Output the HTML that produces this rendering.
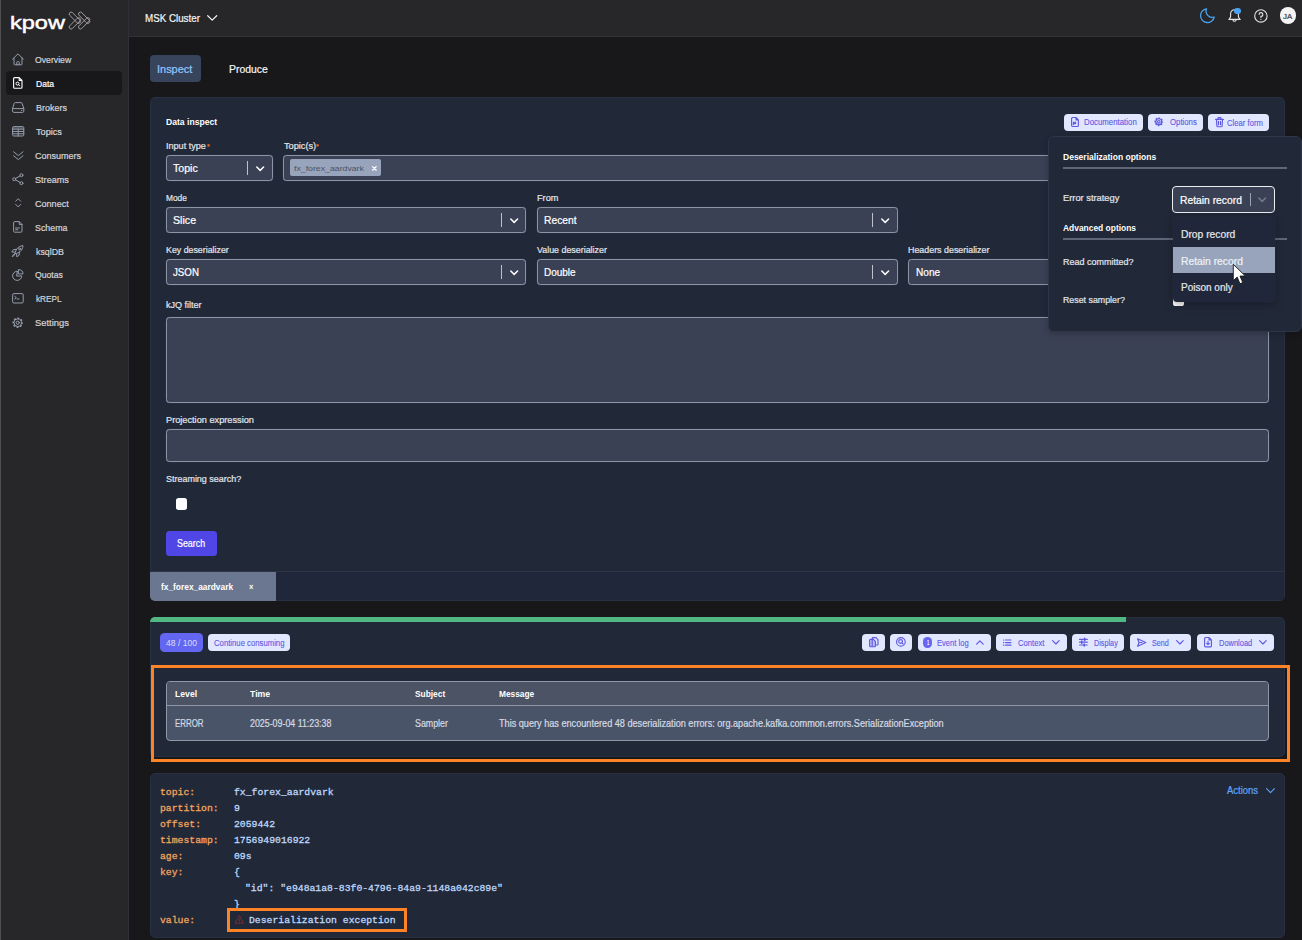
<!DOCTYPE html>
<html lang="en">
<head>
<meta charset="utf-8">
<title>Kpow - Data inspect</title>
<style>
*{box-sizing:border-box;margin:0;padding:0}
html,body{width:1302px;height:940px;overflow:hidden;background:#18181b}
body{font-family:"Liberation Sans",sans-serif;position:relative}
#app{position:absolute;left:0;top:0;width:1302px;height:940px;overflow:hidden}
.b{position:absolute}
.t{position:absolute;white-space:nowrap;line-height:1;transform-origin:0 0;display:block}
svg{position:absolute;overflow:visible}
.ic{fill:none;stroke:#959dad;stroke-width:1;stroke-linecap:round;stroke-linejoin:round}
.ii{fill:none;stroke:#5f58e2;stroke-width:1.15;stroke-linecap:round;stroke-linejoin:round}
.inp{position:absolute;background:#3b4155;border:1px solid #8c94a7;border-radius:3.5px;box-shadow:0 0 .8px rgba(150,158,176,.55)}
.panel{position:absolute;background:#212838;border:1px solid #293042;border-radius:5px}
.btn{position:absolute;background:#e0e7ff;border-radius:4px;height:17.3px;top:633.7px}
.sep{position:absolute;width:1px;background:#bcc1cc}
</style>
</head>
<body>
<div id="app">

<!-- ===== sidebar ===== -->
<div class="b" style="left:0;top:0;width:128px;height:940px;background:#27272a"></div>
<div class="b" style="left:128px;top:0;width:1px;height:940px;background:#2f3138"></div>
<div class="b" style="left:0;top:0;width:1px;height:940px;background:#505053"></div>
<div class="b" style="left:6px;top:71px;width:116px;height:24px;background:#18181b;border-radius:4px"></div>

<!-- ===== header ===== -->
<div class="b" style="left:129px;top:0;width:1173px;height:36px;background:#27272a"></div>
<div class="b" style="left:129px;top:36px;width:1173px;height:1px;background:#323236"></div>

<!-- logo chevrons -->
<svg style="left:0;top:0" width="100" height="36" viewBox="0 0 100 36"><g fill="none" stroke="#b3aeb1" stroke-width=".8">
<rect x="67.65" y="15.85" width="14.4" height="3.8" rx="1.9" transform="rotate(45 74.85 17.75)"/>
<rect x="67.65" y="21.45" width="14.4" height="3.8" rx="1.9" transform="rotate(-45 74.85 23.35)"/>
<rect x="76.95" y="15.85" width="14.4" height="3.8" rx="1.9" transform="rotate(45 84.15 17.75)"/>
<rect x="76.95" y="21.45" width="14.4" height="3.8" rx="1.9" transform="rotate(-45 84.15 23.35)"/>
</g></svg>
<!-- home -->
<svg style="left:12px;top:52.9px" width="12" height="12.4" viewBox="0 0 12 12.4"><path class="ic" d="M.6 6.2 6 .8 11.4 6.2M2 5V11.2A.6.6 0 0 0 2.6 11.8H9.4A.6.6 0 0 0 10 11.2V5M4.8 11.8V9.2A.6.6 0 0 1 5.4 8.6H6.6A.6.6 0 0 1 7.2 9.2V11.8"/></svg>
<!-- data (doc search) active -->
<svg style="left:13px;top:77.4px" width="9.6" height="11.8" viewBox="0 0 9.6 11.8"><path d="M.6 1.6A1 1 0 0 1 1.6.6H6.2L9 3.4V10.2A1 1 0 0 1 8 11.2H1.6A1 1 0 0 1 .6 10.2ZM6.2.6V3.4H9" fill="none" stroke="#fff" stroke-width="1.1" stroke-linejoin="round"/><circle cx="4.5" cy="6.6" r="1.5" fill="none" stroke="#fff" stroke-width="1"/><path d="M5.6 7.7 6.6 8.7" stroke="#fff" stroke-width="1" stroke-linecap="round"/></svg>
<!-- brokers (server) -->
<svg style="left:11.6px;top:101.6px" width="12.4" height="11" viewBox="0 0 12.4 11"><path class="ic" d="M.6 6.6 2.2 1.4A1.2 1.2 0 0 1 3.3.6H9.1A1.2 1.2 0 0 1 10.2 1.4L11.8 6.6V9.2A1.2 1.2 0 0 1 10.6 10.4H1.8A1.2 1.2 0 0 1 .6 9.2ZM.6 6.6H11.8M9.4 8.5H9.8"/></svg>
<!-- topics (table) -->
<svg style="left:11.6px;top:125.8px" width="12.4" height="10.6" viewBox="0 0 12.4 10.6"><path class="ic" d="M.6 1.6A1 1 0 0 1 1.6.6H10.8A1 1 0 0 1 11.8 1.6V9A1 1 0 0 1 10.8 10H1.6A1 1 0 0 1 .6 9ZM.6 3.2H11.8M.6 5.5H11.8M.6 7.8H11.8M6.2 3.2V10"/><path d="M1 1H11.4V3H1Z" fill="#959dad" opacity=".35"/></svg>
<!-- consumers (double chevron down) -->
<svg style="left:12.6px;top:150.6px" width="10.6" height="9.4" viewBox="0 0 10.6 9.4"><path class="ic" d="M.6.8 5.3 4.6 10 .8M.6 4.8 5.3 8.6 10 4.8"/></svg>
<!-- streams (share) -->
<svg style="left:12px;top:173px" width="11.6" height="12.4" viewBox="0 0 11.6 12.4"><g class="ic"><circle cx="2.2" cy="6.2" r="1.5"/><circle cx="9.4" cy="2.2" r="1.5"/><circle cx="9.4" cy="10.2" r="1.5"/><path d="M3.5 5.5 8.1 2.9M3.5 6.9 8.1 9.5"/></g></svg>
<!-- connect (up/down selector) -->
<svg style="left:14.6px;top:198.4px" width="6.4" height="9.6" viewBox="0 0 6.4 9.6"><path class="ic" d="M.7 3.2 3.2.7 5.7 3.2M.7 6.4 3.2 8.9 5.7 6.4"/></svg>
<!-- schema (doc text) -->
<svg style="left:13px;top:221.2px" width="9.6" height="11.8" viewBox="0 0 9.6 11.8"><path class="ic" d="M.6 1.6A1 1 0 0 1 1.6.6H6.2L9 3.4V10.2A1 1 0 0 1 8 11.2H1.6A1 1 0 0 1 .6 10.2ZM6.2.6V3.4H9M2.6 7H6.4M2.6 8.8H4.8"/></svg>
<!-- ksqlDB (rocket) -->
<svg style="left:11.4px;top:244.8px" width="12.6" height="12.4" viewBox="0 0 12.6 12.4"><g class="ic"><path d="M4.2 8.6C4.2 5 6.8 1.2 12 .6 11.6 5.8 7.8 8.4 4.2 8.6Z"/><path d="M5.6 4.4 2.4 4.6.8 7 3.6 7.2M8.4 7.2 8.2 10.2 5.8 11.8 5.6 9"/><circle cx="8.6" cy="4" r="1"/><path d="M3.4 9.2C2.2 9.4 1.4 10.6 1.2 11.6 2.2 11.4 3.4 10.6 3.6 9.4"/></g></svg>
<!-- quotas (pie) -->
<svg style="left:12px;top:268.8px" width="11.6" height="11.8" viewBox="0 0 11.6 11.8"><g class="ic"><path d="M5 2.2A4.6 4.6 0 1 0 9.8 7H5Z"/><path d="M6.8.6A4.4 4.4 0 0 1 11 4.9H6.8Z"/></g></svg>
<!-- kREPL (terminal) -->
<svg style="left:11.8px;top:293.4px" width="11.8" height="10.6" viewBox="0 0 11.8 10.6"><path class="ic" d="M.6 1.8A1.2 1.2 0 0 1 1.8.6H10A1.2 1.2 0 0 1 11.2 1.8V8.8A1.2 1.2 0 0 1 10 10H1.8A1.2 1.2 0 0 1 .6 8.8ZM2.8 3.4 4.4 4.7 2.8 6M5.2 6H7"/></svg>
<!-- settings (gear) -->
<svg style="left:11.8px;top:316.7px" width="11.4" height="11.4" viewBox="0 0 11.4 11.4"><circle cx="5.7" cy="5.7" r="4.5" fill="none" stroke="#959dad" stroke-width="1.5" stroke-dasharray="1.9 1.634" stroke-dashoffset=".95"/><circle class="ic" cx="5.7" cy="5.7" r="3.8"/><circle class="ic" cx="5.7" cy="5.7" r="1.6"/></svg>
<!-- header chevron -->
<svg style="left:206.8px;top:14.8px" width="10.4" height="6" viewBox="0 0 10.4 6"><path d="M.7.7 5.2 5.2 9.7.7" fill="none" stroke="#f4f4f5" stroke-width="1.2" stroke-linecap="round" stroke-linejoin="round"/></svg>
<!-- moon -->
<svg style="left:1200.4px;top:8px" width="15" height="15" viewBox="0 0 15 15"><path d="M6.6.8A6.1 6.1 0 0 0 14.2 9 6.9 6.9 0 1 1 6.6.8Z" fill="none" stroke="#4aa3f0" stroke-width="1.3" stroke-linejoin="round"/></svg>
<!-- bell -->
<svg style="left:1227.6px;top:8.6px" width="13" height="14" viewBox="0 0 13 14"><path d="M6.5.8A3.9 3.9 0 0 0 2.6 4.7V7.4C2.6 8.6 1.6 9.4.8 10.4H12.2C11.4 9.4 10.4 8.6 10.4 7.4V4.7A3.9 3.9 0 0 0 6.5.8ZM4.8 10.6A1.7 1.7 0 0 0 8.2 10.6" fill="none" stroke="#e4e4e7" stroke-width="1.1" stroke-linejoin="round"/></svg>
<div class="b" style="left:1234.1px;top:7.8px;width:6.6px;height:6.6px;border-radius:50%;background:#4aa3f0"></div>
<!-- help -->
<svg style="left:1253.8px;top:8.6px" width="13.8" height="13.8" viewBox="0 0 13.8 13.8"><circle cx="6.9" cy="6.9" r="6.2" fill="none" stroke="#e4e4e7" stroke-width="1.1"/><path d="M5.1 5.4A1.9 1.9 0 1 1 6.9 7.4V8.4M6.9 10.2V10.4" fill="none" stroke="#e4e4e7" stroke-width="1.1" stroke-linecap="round"/></svg>
<!-- avatar -->
<div class="b" style="left:1279.6px;top:7.1px;width:16.7px;height:16.7px;border-radius:50%;background:#f4f4f5"></div>



<!-- ===== tabs ===== -->
<div class="b" style="left:150px;top:55.4px;width:50.5px;height:26.6px;background:#38435c;border-radius:4px"></div>

<!-- ===== panel 1 : data inspect ===== -->
<div class="panel" style="left:150px;top:97.3px;width:1134.5px;height:504px"></div>
<div class="b" style="left:151px;top:571.2px;width:1132.5px;height:1px;background:#2c3446"></div>
<div class="b" style="left:151px;top:572.2px;width:1132.5px;height:28.3px;background:#20273a;border-radius:0 0 4px 0"></div>
<div class="b" style="left:150px;top:572.2px;width:125.5px;height:29.1px;background:#6b7791;border-radius:0 0 0 5px"></div>
<!-- row 1 -->
<div class="inp" style="left:166px;top:155.2px;width:107px;height:25.6px"></div>
<div class="sep" style="left:247.3px;top:161.3px;height:13.4px"></div>
<svg style="left:256px;top:165.6px" width="8.4" height="5.6" viewBox="0 0 8.4 5.6"><path d="M.8 1 4.2 4.4 7.6 1" fill="none" stroke="#fff" stroke-width="1.5" stroke-linecap="round" stroke-linejoin="round"/></svg>
<div class="inp" style="left:283px;top:155.2px;width:985.5px;height:25.6px"></div>
<div class="b" style="left:290.3px;top:159px;width:91px;height:17.3px;background:#98a4bc;border-radius:2px"></div>
<svg style="left:371.6px;top:165.8px" width="4.8" height="4.8" viewBox="0 0 4.8 4.8"><path d="M.6.6 4.2 4.2M4.2.6.6 4.2" fill="none" stroke="#fff" stroke-width="1.25" stroke-linecap="round"/></svg>
<!-- row 2 -->
<div class="inp" style="left:166px;top:207.2px;width:360.3px;height:25.6px"></div>
<div class="sep" style="left:500.8px;top:213.3px;height:13.4px"></div>
<svg style="left:509.6px;top:217.6px" width="8.4" height="5.6" viewBox="0 0 8.4 5.6"><path d="M.8 1 4.2 4.4 7.6 1" fill="none" stroke="#fff" stroke-width="1.5" stroke-linecap="round" stroke-linejoin="round"/></svg>
<div class="inp" style="left:537px;top:207.2px;width:360.5px;height:25.6px"></div>
<div class="sep" style="left:872.2px;top:213.3px;height:13.4px"></div>
<svg style="left:880.8px;top:217.6px" width="8.4" height="5.6" viewBox="0 0 8.4 5.6"><path d="M.8 1 4.2 4.4 7.6 1" fill="none" stroke="#fff" stroke-width="1.5" stroke-linecap="round" stroke-linejoin="round"/></svg>
<!-- row 3 -->
<div class="inp" style="left:166px;top:259.2px;width:360.3px;height:25.6px"></div>
<div class="sep" style="left:500.8px;top:265.3px;height:13.4px"></div>
<svg style="left:509.6px;top:269.6px" width="8.4" height="5.6" viewBox="0 0 8.4 5.6"><path d="M.8 1 4.2 4.4 7.6 1" fill="none" stroke="#fff" stroke-width="1.5" stroke-linecap="round" stroke-linejoin="round"/></svg>
<div class="inp" style="left:537px;top:259.2px;width:360.5px;height:25.6px"></div>
<div class="sep" style="left:872.2px;top:265.3px;height:13.4px"></div>
<svg style="left:880.8px;top:269.6px" width="8.4" height="5.6" viewBox="0 0 8.4 5.6"><path d="M.8 1 4.2 4.4 7.6 1" fill="none" stroke="#fff" stroke-width="1.5" stroke-linecap="round" stroke-linejoin="round"/></svg>
<div class="inp" style="left:908px;top:259.2px;width:360.5px;height:25.6px"></div>
<!-- kJQ + projection -->
<div class="inp" style="left:166px;top:317px;width:1102.5px;height:86px"></div>
<div class="inp" style="left:166px;top:429.4px;width:1102.5px;height:32.2px"></div>
<!-- streaming checkbox / search -->
<div class="b" style="left:176.3px;top:498.4px;width:11.2px;height:11.2px;background:#fff;border-radius:2.6px"></div>
<div class="b" style="left:166px;top:530.5px;width:50.5px;height:25.5px;background:#4f46e5;border-radius:3.5px"></div>
<!-- top-right buttons -->
<div class="b" style="left:1064px;top:113.5px;width:78.6px;height:17.1px;background:#e0e7ff;border-radius:4px"></div>
<div class="b" style="left:1148px;top:113.5px;width:54.6px;height:17.1px;background:#e0e7ff;border-radius:4px"></div>
<div class="b" style="left:1208px;top:114px;width:60.8px;height:16.9px;background:#e0e7ff;border-radius:4px"></div>
<!-- doc icon -->
<svg style="left:1071.2px;top:117px" width="8" height="10" viewBox="0 0 8 10"><path class="ii" d="M.6 1.5A1 1 0 0 1 1.6.5H5L7.4 2.9V8.5A1 1 0 0 1 6.4 9.5H1.6A1 1 0 0 1 .6 8.5ZM5 .5V2.9H7.4M2.4 7.6V5.2H4.6V6.6H2.4"/></svg>
<!-- gear icon -->
<svg style="left:1154.4px;top:117.2px" width="9.6" height="9.6" viewBox="0 0 9.6 9.6"><circle cx="4.8" cy="4.8" r="3.6" fill="none" stroke="#5b54e0" stroke-width="1.5" stroke-dasharray="1.6 1.227" stroke-dashoffset=".8"/><circle class="ii" cx="4.8" cy="4.8" r="3"/><circle class="ii" stroke-width=".9" cx="4.8" cy="4.8" r="1.3"/></svg>
<!-- trash icon -->
<svg style="left:1214.6px;top:117px" width="9" height="10.4" viewBox="0 0 9 10.4"><path class="ii" d="M.6 2.4H8.4M3 2.4V1.2A.6.6 0 0 1 3.6.6H5.4A.6.6 0 0 1 6 1.2V2.4M1.5 2.4 1.9 9A.9.9 0 0 0 2.8 9.8H6.2A.9.9 0 0 0 7.1 9L7.5 2.4M3.5 4.4V7.8M5.5 4.4V7.8"/></svg>


<!-- ===== panel 2 : results toolbar + event log ===== -->
<div class="panel" style="left:150px;top:617px;width:1134.5px;height:140px"></div>
<div class="b" style="left:150px;top:617px;width:975.8px;height:5.4px;background:#52b883;border-radius:5px 0 0 0"></div>
<!-- badges -->
<div class="b" style="left:160px;top:633px;width:42.6px;height:18.8px;background:#6366f1;border-radius:4.5px"></div>
<div class="b" style="left:207.7px;top:633.5px;width:82.8px;height:17.5px;background:#e0e7ff;border-radius:4px"></div>
<!-- toolbar buttons -->
<div class="btn" style="left:862.1px;width:22.8px"></div>
<div class="btn" style="left:890px;width:22.1px"></div>
<div class="btn" style="left:917.5px;width:73.2px"></div>
<div class="btn" style="left:996.1px;width:70.9px"></div>
<div class="btn" style="left:1072.2px;width:52.3px"></div>
<div class="btn" style="left:1130.1px;width:60.9px"></div>
<div class="btn" style="left:1196.5px;width:77.6px"></div>
<!-- copy icon -->
<svg style="left:868.6px;top:637.2px" width="9.6" height="10.4" viewBox="0 0 9.6 10.4"><path d="M.6 3.2A.8.8 0 0 1 1.4 2.4H4.4L6.4 4.4V9A.8.8 0 0 1 5.6 9.8H1.4A.8.8 0 0 1 .6 9Z" fill="#5f58e2" opacity=".28"/><path class="ii" d="M3.2 2.2V1.4A.8.8 0 0 1 4 .6H7L9 2.6V7.2A.8.8 0 0 1 8.2 8H6.4M.6 3.2A.8.8 0 0 1 1.4 2.4H4.4L6.4 4.4V9A.8.8 0 0 1 5.6 9.8H1.4A.8.8 0 0 1 .6 9ZM3.2 2.4V9.8"/></svg>
<!-- search-circle icon -->
<svg style="left:896.2px;top:637.2px" width="9.8" height="9.8" viewBox="0 0 9.8 9.8"><circle class="ii" cx="4.9" cy="4.9" r="4.3"/><circle class="ii" cx="4.6" cy="4.5" r="1.9"/><path class="ii" d="M6 5.9 7.3 7.2"/></svg>
<!-- "1" pill -->
<div class="b" style="left:923.4px;top:637.2px;width:8.5px;height:10.4px;background:#6866f1;border-radius:4.2px"></div>
<!-- chevron up -->
<svg style="left:975.8px;top:640.2px" width="7.8" height="4.8" viewBox="0 0 7.8 4.8"><path class="ii" d="M.6 4.2 3.9.8 7.2 4.2"/></svg>
<!-- list icon -->
<svg style="left:1003.2px;top:639px" width="8.4" height="7.2" viewBox="0 0 8.4 7.2"><path class="ii" stroke-width="1.1" d="M2.6 1H8M2.6 3.6H8M2.6 6.2H8M.5 1H.9M.5 3.6H.9M.5 6.2H.9"/></svg>
<svg style="left:1051.9px;top:640.2px" width="7.8" height="4.8" viewBox="0 0 7.8 4.8"><path class="ii" d="M.6.6 3.9 4 7.2.6"/></svg>
<!-- sliders icon -->
<svg style="left:1078.8px;top:637.8px" width="8.8" height="8.4" viewBox="0 0 8.8 8.4"><path class="ii" stroke-width="1.1" d="M.5 1.4H8.3M.5 4.2H8.3M.5 7H8.3"/><path d="M5.6.3V2.5M2.8 3.1V5.3M5.2 5.9V8.1" stroke="#5b54e0" stroke-width="1.5" stroke-linecap="round"/></svg>
<!-- send icon -->
<svg style="left:1136.8px;top:637.6px" width="9.4" height="9" viewBox="0 0 9.4 9"><path class="ii" d="M.6.7 8.8 4.5.6 8.3 2 4.5ZM2 4.5H5"/></svg>
<svg style="left:1176.3px;top:640.2px" width="7.8" height="4.8" viewBox="0 0 7.8 4.8"><path class="ii" d="M.6.6 3.9 4 7.2.6"/></svg>
<!-- download icon -->
<svg style="left:1203.9px;top:637px" width="8" height="10.4" viewBox="0 0 8 10.4"><path class="ii" d="M.6 1.5A1 1 0 0 1 1.6.5H5L7.4 2.9V8.9A1 1 0 0 1 6.4 9.9H1.6A1 1 0 0 1 .6 8.9ZM5 .5V2.9H7.4M4 4.4V7.6M2.7 6.4 4 7.7 5.3 6.4"/></svg>
<svg style="left:1259.4px;top:640.2px" width="7.8" height="4.8" viewBox="0 0 7.8 4.8"><path class="ii" d="M.6.6 3.9 4 7.2.6"/></svg>
<!-- event log table -->
<div class="b" style="left:165.8px;top:681px;width:1103px;height:60.2px;background:#4a5469;border:1px solid #8f97a8;border-radius:4px;overflow:hidden">
  <div class="b" style="left:0;top:0;width:1103px;height:23.3px;background:#4c5364"></div>
  <div class="b" style="left:0;top:23.3px;width:1103px;height:1px;background:#8f97a8"></div>
</div>
<!-- orange highlight -->
<div class="b" style="left:150.8px;top:665px;width:1139.4px;height:97px;border:3.3px solid #fc8326;z-index:5"></div>


<!-- ===== panel 3 : record ===== -->
<div class="panel" style="left:150px;top:773px;width:1134.5px;height:164.7px"></div>
<svg style="left:1266px;top:787.8px" width="9" height="5.4" viewBox="0 0 9 5.4"><path d="M.6.6 4.5 4.6 8.4.6" fill="none" stroke="#60a5fa" stroke-width="1.1" stroke-linecap="round" stroke-linejoin="round"/></svg>
<!-- warning icon -->
<svg style="left:234.6px;top:914.6px" width="9.2" height="9" viewBox="0 0 9.2 9"><path d="M4.6.9 8.6 8.2H.6ZM4.6 3.6V5.6M4.6 6.7V6.9" fill="none" stroke="#8e2b30" stroke-width=".85" stroke-linecap="round" stroke-linejoin="round"/></svg>
<!-- orange highlight -->
<div class="b" style="left:227.1px;top:908.2px;width:180.4px;height:23.4px;border:3px solid #fc8326;z-index:5"></div>


<!-- ===== options popover ===== -->
<div class="b" style="left:1047.6px;top:136px;width:254.4px;height:196px;background:#212838;border:1px solid #2d3548;border-radius:6px;box-shadow:0 2px 6px rgba(0,0,0,.22);z-index:20"></div>
<div class="b" style="left:1063px;top:167px;width:224px;height:2px;background:#5f6678;z-index:21"></div>
<div class="b" style="left:1063px;top:238px;width:224px;height:2px;background:#5f6678;z-index:21"></div>
<!-- error strategy select (focused) -->
<div class="b" style="left:1172.4px;top:186px;width:102.6px;height:27px;background:#3b4155;border:1px solid #eceef2;border-radius:4px;z-index:22"></div>
<div class="b" style="left:1249.5px;top:193px;width:1px;height:13px;background:#9aa1b0;z-index:23"></div>
<svg style="left:1258.2px;top:197.4px;z-index:23" width="8.4" height="5.6" viewBox="0 0 8.4 5.6"><path d="M.8 1 4.2 4.4 7.6 1" fill="none" stroke="#727a8c" stroke-width="1.5" stroke-linecap="round" stroke-linejoin="round"/></svg>
<!-- hidden checkboxes -->
<div class="b" style="left:1172.8px;top:257.5px;width:10.8px;height:10.8px;background:#fff;border-radius:2.6px;z-index:22"></div>
<div class="b" style="left:1172.8px;top:295px;width:10.8px;height:10.8px;background:#fff;border-radius:2.6px;z-index:22"></div>
<!-- dropdown menu -->
<div class="b" style="left:1172.6px;top:217.3px;width:102.4px;height:84.8px;background:#20273a;border-radius:4px;box-shadow:0 2px 8px rgba(0,0,0,.35),0 0 0 1px rgba(255,255,255,.03);z-index:35"></div>
<div class="b" style="left:1172.6px;top:246.8px;width:102.4px;height:26.5px;background:#98a4bc;z-index:36"></div>
<!-- mouse cursor -->
<svg style="left:1231.7px;top:262.9px;z-index:50" width="15.1" height="22.7" viewBox="0 0 14 21"><path d="M1.2 1.2V16.4L4.8 13 7.4 19.2 10 18.1 7.4 12.1H12.4Z" fill="#fff" stroke="#111" stroke-width=".8" stroke-linejoin="round"/></svg>


<span class="t" style="left:35.00px;top:54.90px;font-size:9.75px;color:#d4d4d8;transform:scaleX(0.8896);-webkit-text-stroke:.22px;">Overview</span>
<span class="t" style="left:35.50px;top:78.85px;font-size:9.75px;color:#ffffff;transform:scaleX(0.8738);-webkit-text-stroke:.22px;">Data</span>
<span class="t" style="left:35.50px;top:102.80px;font-size:9.75px;color:#d4d4d8;transform:scaleX(0.9194);-webkit-text-stroke:.22px;">Brokers</span>
<span class="t" style="left:35.50px;top:126.75px;font-size:9.75px;color:#d4d4d8;transform:scaleX(0.9366);-webkit-text-stroke:.22px;">Topics</span>
<span class="t" style="left:35.00px;top:150.70px;font-size:9.75px;color:#d4d4d8;transform:scaleX(0.9205);-webkit-text-stroke:.22px;">Consumers</span>
<span class="t" style="left:35.00px;top:174.65px;font-size:9.75px;color:#d4d4d8;transform:scaleX(0.9334);-webkit-text-stroke:.22px;">Streams</span>
<span class="t" style="left:35.00px;top:198.60px;font-size:9.75px;color:#d4d4d8;transform:scaleX(0.9288);-webkit-text-stroke:.22px;">Connect</span>
<span class="t" style="left:35.00px;top:222.55px;font-size:9.75px;color:#d4d4d8;transform:scaleX(0.9080);-webkit-text-stroke:.22px;">Schema</span>
<span class="t" style="left:35.50px;top:246.50px;font-size:9.75px;color:#d4d4d8;transform:scaleX(0.9052);-webkit-text-stroke:.22px;">ksqlDB</span>
<span class="t" style="left:35.00px;top:270.45px;font-size:9.75px;color:#d4d4d8;transform:scaleX(0.8872);-webkit-text-stroke:.22px;">Quotas</span>
<span class="t" style="left:35.50px;top:294.40px;font-size:9.75px;color:#d4d4d8;transform:scaleX(0.8408);-webkit-text-stroke:.22px;">kREPL</span>
<span class="t" style="left:35.00px;top:318.35px;font-size:9.75px;color:#d4d4d8;transform:scaleX(0.9617);-webkit-text-stroke:.22px;">Settings</span>
<span class="t" style="left:9.53px;top:13.60px;font-size:18.6px;color:#ffffff;transform:scaleX(1.2657);-webkit-text-stroke:.45px #fff;">kpow</span>
<span class="t" style="left:144.60px;top:13.00px;font-size:11px;color:#f4f4f5;transform:scaleX(0.8893);-webkit-text-stroke:.22px;">MSK Cluster</span>
<span class="t" style="left:1283.40px;top:12.60px;font-size:7.2px;color:#3f3f46;transform:scaleX(1.0938);-webkit-text-stroke:.22px;">JA</span>
<span class="t" style="left:156.89px;top:64.10px;font-size:10.9px;color:#93c5fd;transform:scaleX(1.0062);-webkit-text-stroke:.22px;">Inspect</span>
<span class="t" style="left:229.30px;top:64.10px;font-size:10.9px;color:#f4f4f5;transform:scaleX(0.9554);-webkit-text-stroke:.22px;">Produce</span>
<span class="t" style="left:166.00px;top:118.40px;font-size:9.0px;color:#ffffff;font-weight:700;transform:scaleX(0.9567);">Data inspect</span>
<span class="t" style="left:166.00px;top:141.30px;font-size:9.8px;color:#e2e5ea;transform:scaleX(0.9247);-webkit-text-stroke:.22px;">Input type</span>
<span class="t" style="left:207.00px;top:143.00px;font-size:8px;color:#f97316;transform:scaleX(0.8667);-webkit-text-stroke:.22px;">*</span>
<span class="t" style="left:283.60px;top:141.30px;font-size:9.8px;color:#e2e5ea;transform:scaleX(0.9374);-webkit-text-stroke:.22px;">Topic(s)</span>
<span class="t" style="left:316.20px;top:143.00px;font-size:8px;color:#f97316;transform:scaleX(0.8667);-webkit-text-stroke:.22px;">*</span>
<span class="t" style="left:173.20px;top:163.00px;font-size:11px;color:#ffffff;transform:scaleX(0.9626);-webkit-text-stroke:.22px;">Topic</span>
<span class="t" style="left:294.30px;top:164.70px;font-size:7.8px;color:#4f5567;transform:scaleX(1.1199);-webkit-text-stroke:.05px;">fx_forex_aardvark</span>
<span class="t" style="left:166.00px;top:193.30px;font-size:9.8px;color:#e2e5ea;transform:scaleX(0.8540);-webkit-text-stroke:.22px;">Mode</span>
<span class="t" style="left:172.60px;top:215.00px;font-size:11px;color:#ffffff;transform:scaleX(0.9695);-webkit-text-stroke:.22px;">Slice</span>
<span class="t" style="left:536.80px;top:193.30px;font-size:9.8px;color:#e2e5ea;transform:scaleX(0.9341);-webkit-text-stroke:.22px;">From</span>
<span class="t" style="left:544.00px;top:215.00px;font-size:11px;color:#ffffff;transform:scaleX(0.9340);-webkit-text-stroke:.22px;">Recent</span>
<span class="t" style="left:166.00px;top:245.30px;font-size:9.8px;color:#e2e5ea;transform:scaleX(0.9001);-webkit-text-stroke:.22px;">Key deserializer</span>
<span class="t" style="left:173.00px;top:267.10px;font-size:11px;color:#ffffff;transform:scaleX(0.8846);-webkit-text-stroke:.22px;">JSON</span>
<span class="t" style="left:536.80px;top:245.30px;font-size:9.8px;color:#e2e5ea;transform:scaleX(0.9052);-webkit-text-stroke:.22px;">Value deserializer</span>
<span class="t" style="left:544.00px;top:267.10px;font-size:11px;color:#ffffff;transform:scaleX(0.9067);-webkit-text-stroke:.22px;">Double</span>
<span class="t" style="left:908.40px;top:245.30px;font-size:9.8px;color:#e2e5ea;transform:scaleX(0.9063);-webkit-text-stroke:.22px;">Headers deserializer</span>
<span class="t" style="left:915.50px;top:267.10px;font-size:11px;color:#ffffff;transform:scaleX(0.9168);-webkit-text-stroke:.22px;">None</span>
<span class="t" style="left:166.00px;top:300.30px;font-size:9.8px;color:#e2e5ea;transform:scaleX(0.9217);-webkit-text-stroke:.22px;">kJQ filter</span>
<span class="t" style="left:166.00px;top:415.30px;font-size:9.8px;color:#e2e5ea;transform:scaleX(0.9387);-webkit-text-stroke:.22px;">Projection expression</span>
<span class="t" style="left:165.80px;top:474.30px;font-size:9.8px;color:#e2e5ea;transform:scaleX(0.9145);-webkit-text-stroke:.22px;">Streaming search?</span>
<span class="t" style="left:177.00px;top:539.00px;font-size:10.4px;color:#ffffff;transform:scaleX(0.8539);-webkit-text-stroke:.22px;">Search</span>
<span class="t" style="left:160.60px;top:583.00px;font-size:9.3px;color:#ffffff;font-weight:700;transform:scaleX(0.8995);">fx_forex_aardvark</span>
<span class="t" style="left:249.00px;top:583.30px;font-size:8.5px;color:#ffffff;transform:scaleX(0.8800);-webkit-text-stroke:.22px;">×</span>
<span class="t" style="left:1083.90px;top:118.30px;font-size:8.3px;color:#5f58e2;transform:scaleX(0.9450);-webkit-text-stroke:.1px;">Documentation</span>
<span class="t" style="left:1169.80px;top:118.30px;font-size:8.3px;color:#5f58e2;transform:scaleX(0.9387);-webkit-text-stroke:.1px;">Options</span>
<span class="t" style="left:1227.00px;top:118.70px;font-size:8.3px;color:#5f58e2;transform:scaleX(0.9275);-webkit-text-stroke:.1px;">Clear form</span>
<span class="t" style="left:1063.10px;top:153.00px;font-size:9.0px;color:#ffffff;font-weight:700;transform:scaleX(0.9461);z-index:30;">Deserialization options</span>
<span class="t" style="left:1063.10px;top:193.30px;font-size:9.8px;color:#e2e5ea;transform:scaleX(0.9488);-webkit-text-stroke:.22px;z-index:30;">Error strategy</span>
<span class="t" style="left:1180.40px;top:194.60px;font-size:11px;color:#ffffff;transform:scaleX(0.9376);-webkit-text-stroke:.22px;z-index:30;">Retain record</span>
<span class="t" style="left:1063.00px;top:224.00px;font-size:9.0px;color:#ffffff;font-weight:700;transform:scaleX(0.9359);z-index:30;">Advanced options</span>
<span class="t" style="left:1063.00px;top:257.20px;font-size:9.8px;color:#e2e5ea;transform:scaleX(0.9182);-webkit-text-stroke:.22px;z-index:30;">Read committed?</span>
<span class="t" style="left:1063.00px;top:294.70px;font-size:9.8px;color:#e2e5ea;transform:scaleX(0.9008);-webkit-text-stroke:.22px;z-index:30;">Reset sampler?</span>
<span class="t" style="left:1181.40px;top:228.50px;font-size:11px;color:#e5e7eb;transform:scaleX(0.9351);-webkit-text-stroke:.22px;z-index:40;">Drop record</span>
<span class="t" style="left:1181.40px;top:255.60px;font-size:11px;color:#eef1f6;transform:scaleX(0.9376);-webkit-text-stroke:.22px;z-index:40;">Retain record</span>
<span class="t" style="left:1181.40px;top:281.60px;font-size:11px;color:#e5e7eb;transform:scaleX(0.9082);-webkit-text-stroke:.22px;z-index:40;">Poison only</span>
<span class="t" style="left:166.00px;top:638.80px;font-size:8.8px;color:#d9dcfd;transform:scaleX(0.9717);-webkit-text-stroke:.05px;">48 / 100</span>
<span class="t" style="left:213.70px;top:639.00px;font-size:8.3px;color:#5f58e2;transform:scaleX(0.9313);-webkit-text-stroke:.1px;">Continue consuming</span>
<span class="t" style="left:926.60px;top:639.20px;font-size:7.5px;color:#ffffff;font-weight:700;transform:scaleX(0.5250);">1</span>
<span class="t" style="left:937.00px;top:638.80px;font-size:8.3px;color:#5f58e2;transform:scaleX(0.9148);-webkit-text-stroke:.1px;">Event log</span>
<span class="t" style="left:1018.00px;top:638.80px;font-size:8.3px;color:#5f58e2;transform:scaleX(0.9253);-webkit-text-stroke:.1px;">Context</span>
<span class="t" style="left:1094.30px;top:638.80px;font-size:8.3px;color:#5f58e2;transform:scaleX(0.8733);-webkit-text-stroke:.1px;">Display</span>
<span class="t" style="left:1151.80px;top:638.80px;font-size:8.3px;color:#5f58e2;transform:scaleX(0.8703);-webkit-text-stroke:.1px;">Send</span>
<span class="t" style="left:1218.50px;top:638.80px;font-size:8.3px;color:#5f58e2;transform:scaleX(0.9012);-webkit-text-stroke:.1px;">Download</span>
<span class="t" style="left:174.50px;top:689.00px;font-size:9.5px;color:#ffffff;font-weight:700;transform:scaleX(0.9090);">Level</span>
<span class="t" style="left:249.80px;top:689.00px;font-size:9.5px;color:#ffffff;font-weight:700;transform:scaleX(0.9163);">Time</span>
<span class="t" style="left:414.90px;top:689.00px;font-size:9.5px;color:#ffffff;font-weight:700;transform:scaleX(0.8791);">Subject</span>
<span class="t" style="left:498.80px;top:689.00px;font-size:9.5px;color:#ffffff;font-weight:700;transform:scaleX(0.8783);">Message</span>
<span class="t" style="left:174.60px;top:718.80px;font-size:10px;color:#d5d9e0;transform:scaleX(0.7913);-webkit-text-stroke:.22px;">ERROR</span>
<span class="t" style="left:249.80px;top:718.80px;font-size:10px;color:#d5d9e0;transform:scaleX(0.8838);-webkit-text-stroke:.22px;">2025-09-04 11:23:38</span>
<span class="t" style="left:414.90px;top:718.80px;font-size:10px;color:#d5d9e0;transform:scaleX(0.8838);-webkit-text-stroke:.22px;">Sampler</span>
<span class="t" style="left:498.80px;top:718.80px;font-size:10px;color:#d5d9e0;transform:scaleX(0.9133);-webkit-text-stroke:.22px;">This query has encountered 48 deserialization errors: org.apache.kafka.common.errors.SerializationException</span>
<span class="t" style="left:1227.00px;top:785.80px;font-size:10.3px;color:#60a5fa;transform:scaleX(0.9191);-webkit-text-stroke:.22px;">Actions</span>
<span class="t" style="left:159.80px;top:787.50px;font-size:9.77px;color:#f0a35e;font-family:'Liberation Mono', monospace;transform:scaleX(1.0004);-webkit-text-stroke:.3px;">topic:</span>
<span class="t" style="left:233.50px;top:787.50px;font-size:9.77px;color:#bfd7fa;font-family:'Liberation Mono', monospace;transform:scaleX(1.0004);-webkit-text-stroke:.3px;">fx_forex_aardvark</span>
<span class="t" style="left:159.80px;top:803.53px;font-size:9.77px;color:#f0a35e;font-family:'Liberation Mono', monospace;transform:scaleX(1.0004);-webkit-text-stroke:.3px;">partition:</span>
<span class="t" style="left:233.50px;top:803.53px;font-size:9.77px;color:#bfd7fa;font-family:'Liberation Mono', monospace;transform:scaleX(1.0004);-webkit-text-stroke:.3px;">9</span>
<span class="t" style="left:159.80px;top:819.56px;font-size:9.77px;color:#f0a35e;font-family:'Liberation Mono', monospace;transform:scaleX(1.0004);-webkit-text-stroke:.3px;">offset:</span>
<span class="t" style="left:233.50px;top:819.56px;font-size:9.77px;color:#bfd7fa;font-family:'Liberation Mono', monospace;transform:scaleX(1.0004);-webkit-text-stroke:.3px;">2059442</span>
<span class="t" style="left:159.80px;top:835.59px;font-size:9.77px;color:#f0a35e;font-family:'Liberation Mono', monospace;transform:scaleX(1.0004);-webkit-text-stroke:.3px;">timestamp:</span>
<span class="t" style="left:233.50px;top:835.59px;font-size:9.77px;color:#bfd7fa;font-family:'Liberation Mono', monospace;transform:scaleX(1.0004);-webkit-text-stroke:.3px;">1756949016922</span>
<span class="t" style="left:159.80px;top:851.62px;font-size:9.77px;color:#f0a35e;font-family:'Liberation Mono', monospace;transform:scaleX(1.0004);-webkit-text-stroke:.3px;">age:</span>
<span class="t" style="left:233.50px;top:851.62px;font-size:9.77px;color:#bfd7fa;font-family:'Liberation Mono', monospace;transform:scaleX(1.0004);-webkit-text-stroke:.3px;">09s</span>
<span class="t" style="left:159.80px;top:867.65px;font-size:9.77px;color:#f0a35e;font-family:'Liberation Mono', monospace;transform:scaleX(1.0004);-webkit-text-stroke:.3px;">key:</span>
<span class="t" style="left:233.50px;top:867.65px;font-size:9.77px;color:#bfd7fa;font-family:'Liberation Mono', monospace;transform:scaleX(1.0004);-webkit-text-stroke:.3px;">{</span>
<span class="t" style="left:245.20px;top:883.68px;font-size:9.77px;color:#bfd7fa;font-family:'Liberation Mono', monospace;transform:scaleX(1.0004);-webkit-text-stroke:.3px;">&quot;id&quot;: &quot;e948a1a8-83f0-4796-84a9-1148a042c89e&quot;</span>
<span class="t" style="left:233.50px;top:899.71px;font-size:9.77px;color:#bfd7fa;font-family:'Liberation Mono', monospace;transform:scaleX(1.0004);-webkit-text-stroke:.3px;">}</span>
<span class="t" style="left:159.80px;top:915.74px;font-size:9.77px;color:#f0a35e;font-family:'Liberation Mono', monospace;transform:scaleX(1.0004);-webkit-text-stroke:.3px;">value:</span>
<span class="t" style="left:249.30px;top:915.74px;font-size:9.77px;color:#bfd7fa;font-family:'Liberation Mono', monospace;transform:scaleX(1.0004);-webkit-text-stroke:.3px;">Deserialization exception</span>
</div>
</body>
</html>
